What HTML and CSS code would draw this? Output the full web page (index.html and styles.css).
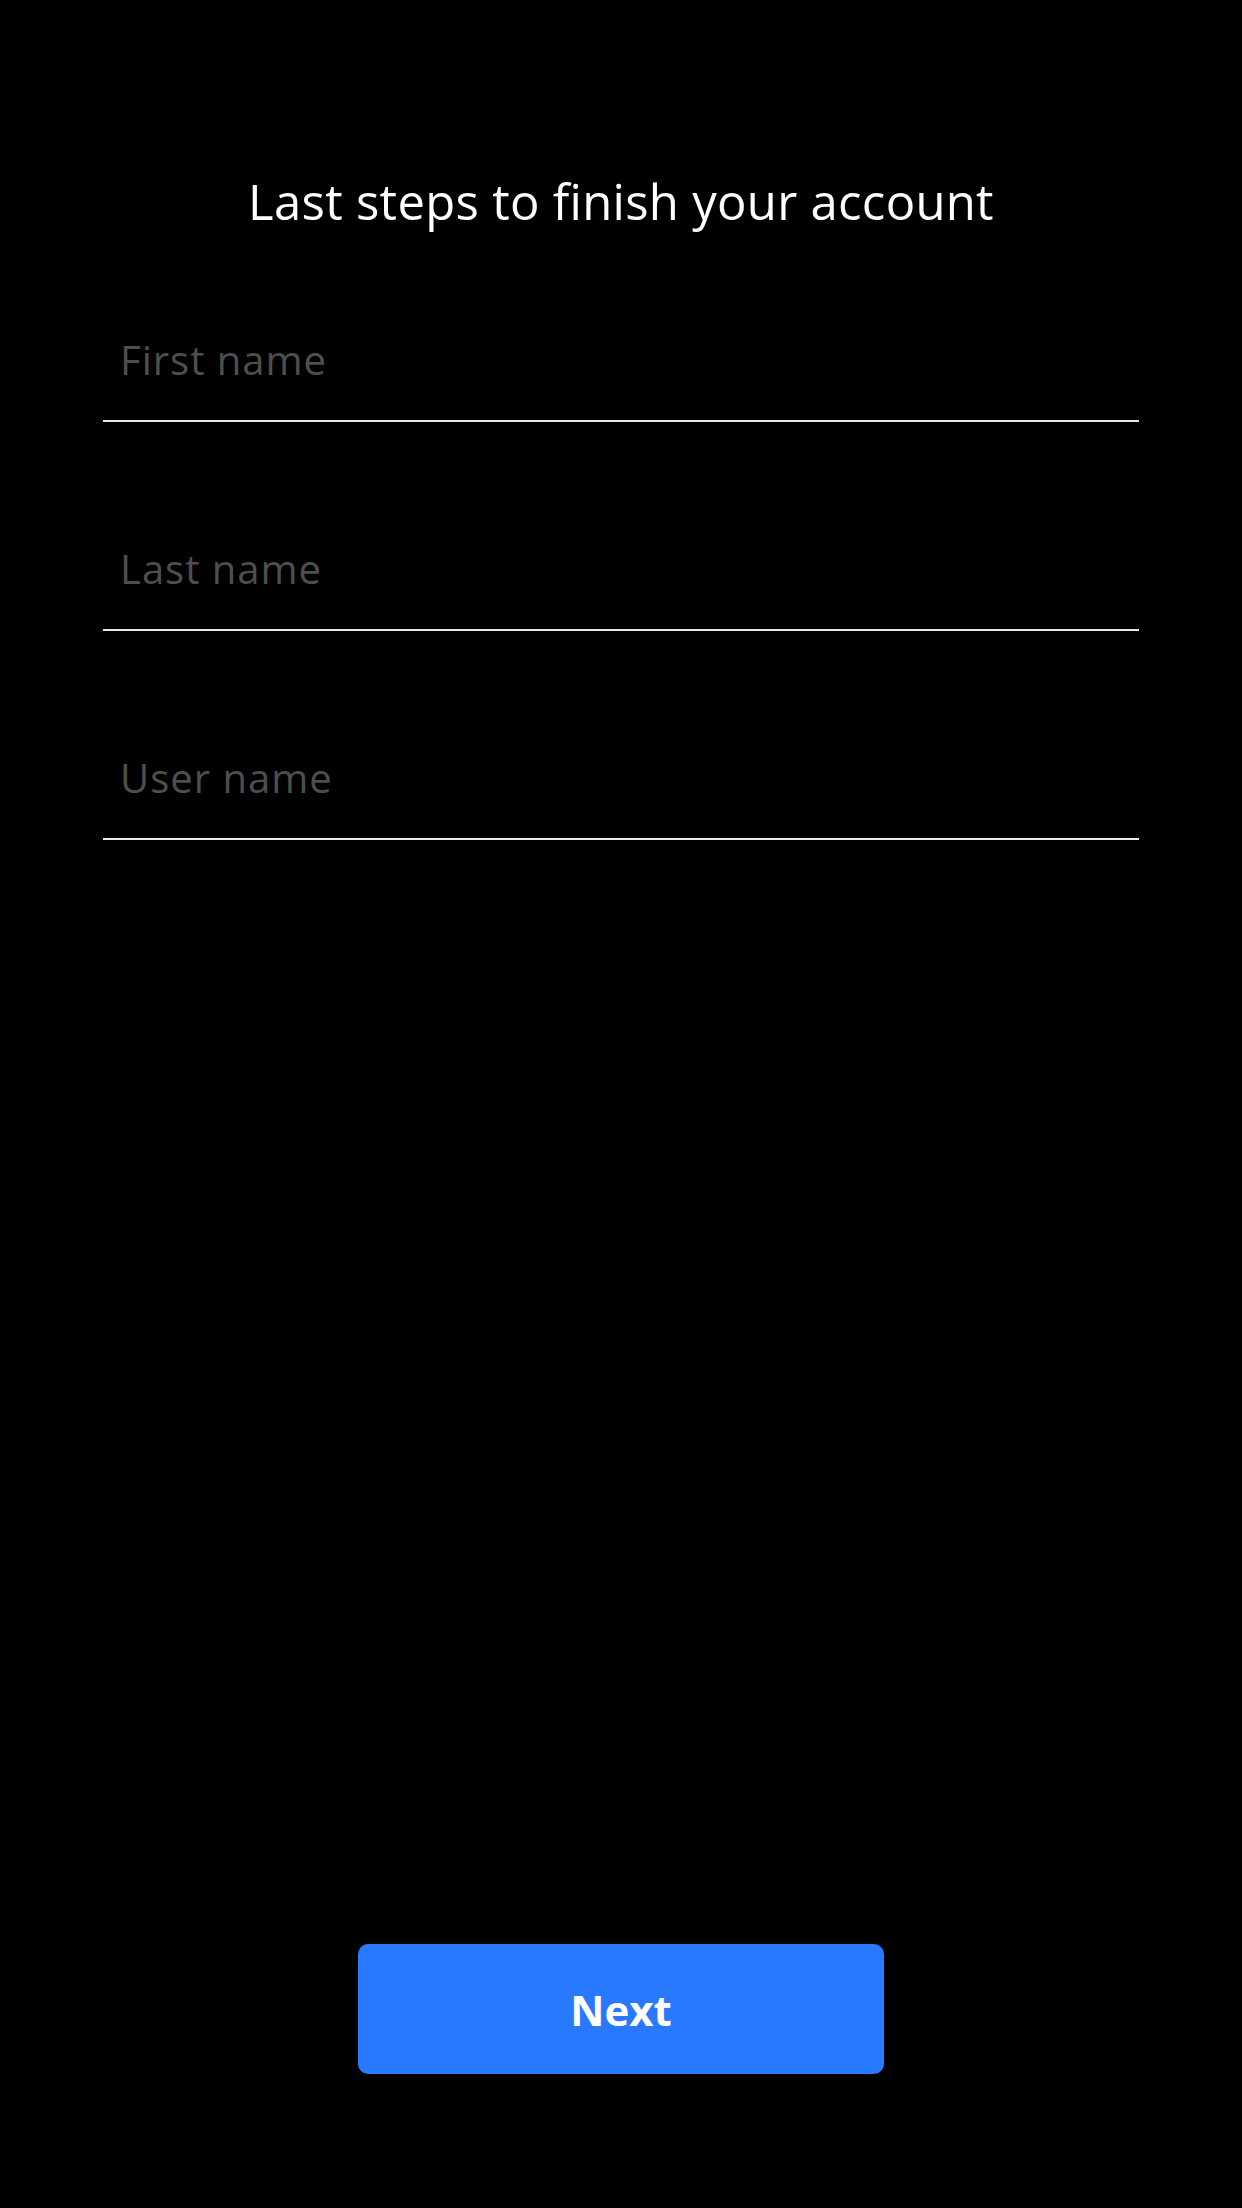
FILE: index.html
```html
<!DOCTYPE html>
<html lang="en">
<head>
<meta charset="utf-8">
<title>Last steps</title>
<link rel="stylesheet" href="styles.css">
</head>
<body>
<main class="screen">
  <h1 class="title">Last steps to finish your account</h1>
  <form class="form">
    <label class="field"><input class="field-input" type="text" placeholder="First name"></label>
    <label class="field"><input class="field-input" type="text" placeholder="Last name"></label>
    <label class="field"><input class="field-input" type="text" placeholder="User name"></label>
  </form>
  <div class="actions">
    <button class="btn-next" type="button">Next</button>
  </div>
</main>
</body>
</html>
```
FILE: styles.css
```css
html, body {
  margin: 0;
  padding: 0;
  background: #000;
}
.screen {
  box-sizing: border-box;
  width: 1242px;
  min-height: 2208px;
  display: flex;
  flex-direction: column;
  font-family: "Open Sans", "Liberation Sans", sans-serif;
  color: #fff;
  padding: 171px 103px 134px;
}
.title {
  margin: 0;
  font-size: 49px;
  line-height: 60px;
  font-weight: 400;
  text-align: center;
  letter-spacing: 0.3px;
}
.form {
  display: flex;
  flex-direction: column;
  gap: 122px;
  margin: 104px 0 0;
}
.field {
  display: block;
  border-bottom: 2px solid #e8e8e8;
  padding: 1px 0 36px 17px;
}
.field-input {
  display: block;
  box-sizing: border-box;
  width: 100%;
  height: 48px;
  margin: 0;
  padding: 0;
  border: 0;
  outline: none;
  background: transparent;
  color: #fff;
  font-family: inherit;
  font-size: 40px;
  line-height: 48px;
  letter-spacing: 1px;
}
.field-input::placeholder {
  color: #4e4e4e;
  opacity: 1;
}
.actions {
  margin-top: auto;
  display: flex;
  justify-content: center;
}
.btn-next {
  width: 526px;
  height: 130px;
  border: 0;
  border-radius: 10px;
  background: #2979ff;
  color: #fff;
  font-family: "Open Sans", "Liberation Sans", sans-serif;
  font-weight: 700;
  font-size: 42px;
  padding: 0;
}
```
